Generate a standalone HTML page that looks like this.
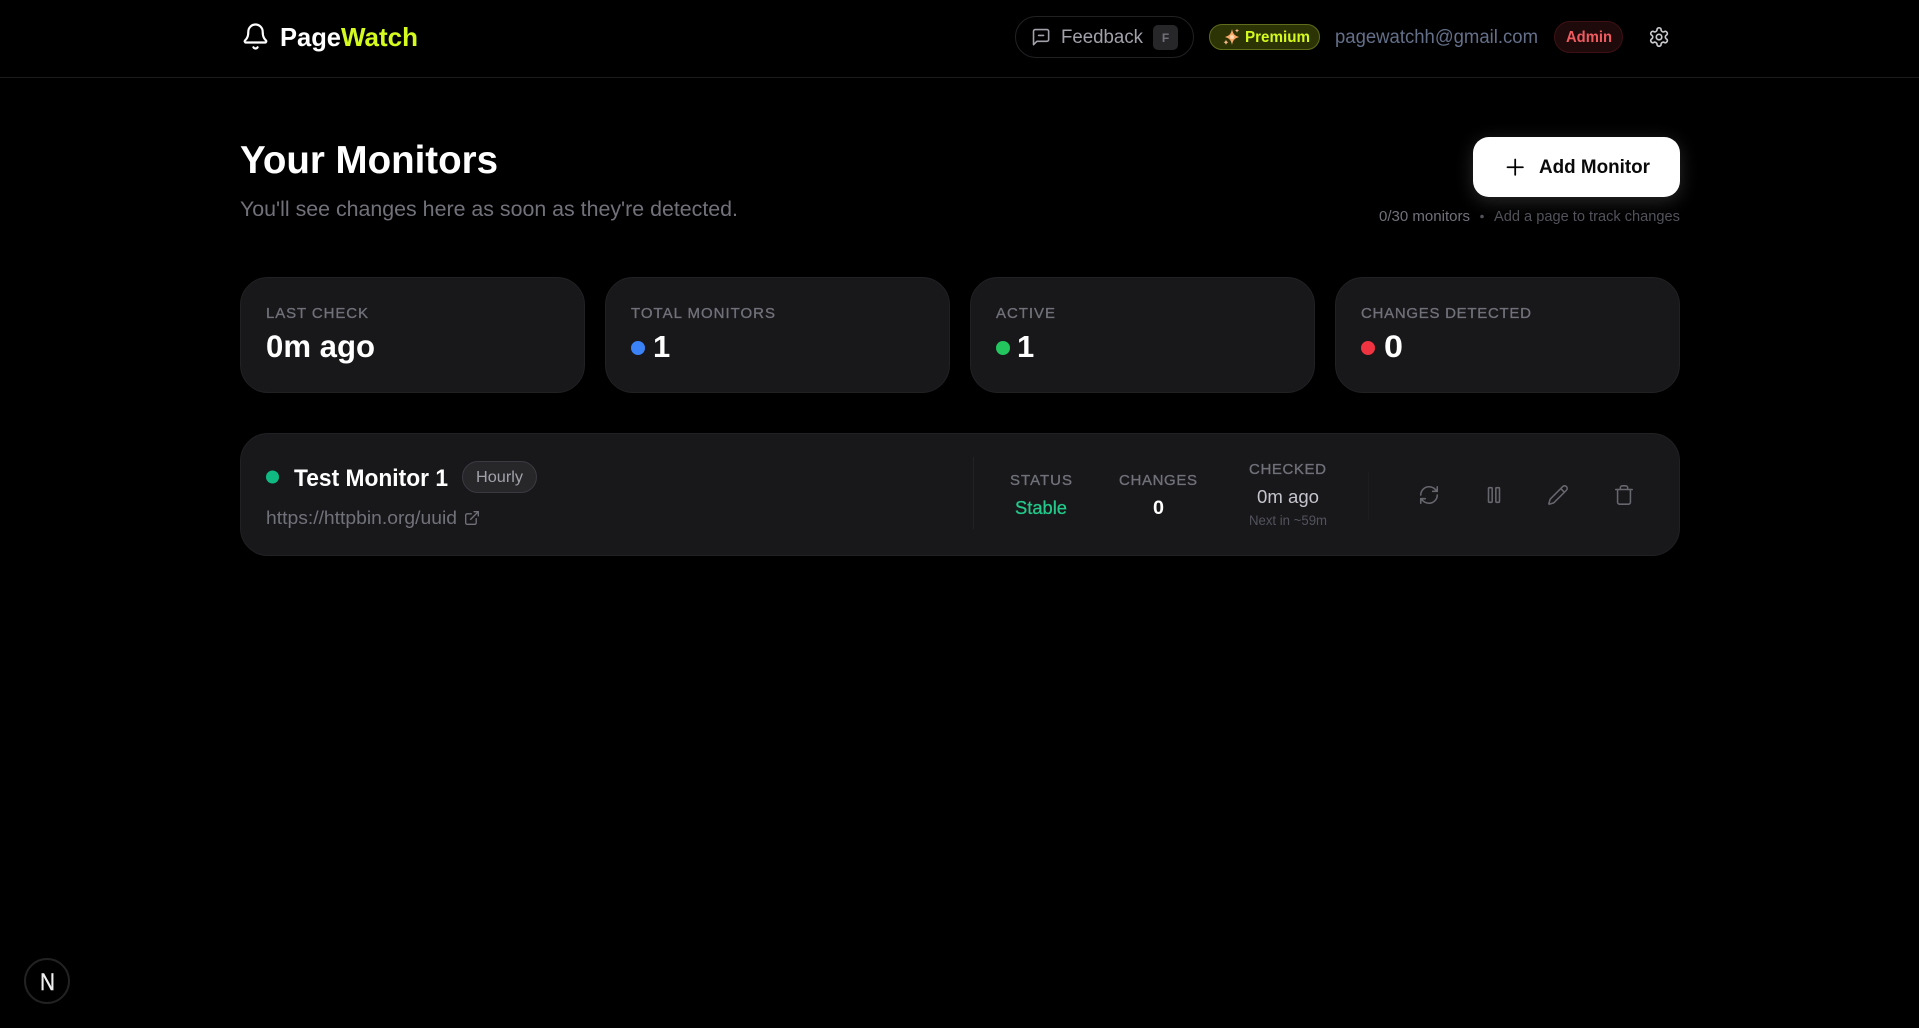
<!DOCTYPE html>
<html lang="en">
<head>
<meta charset="utf-8">
<title>PageWatch</title>
<style>
html,body{margin:0;padding:0;background:#000;width:1919px;height:1028px;overflow:hidden}
body{position:relative;font-family:"Liberation Sans",sans-serif}
.b{position:absolute;box-sizing:border-box}
.card{background:#18181b;border:1px solid #212124;border-radius:28px}
svg{position:absolute;left:0;top:0}
text{font-family:"Liberation Sans",sans-serif}
.i{fill:none;stroke-linecap:round;stroke-linejoin:round}
.l{font-size:15px;fill:#71717a;stroke:#71717a;stroke-width:.3px}
</style>
</head>
<body>
<div class="b" style="left:0;top:77px;width:1919px;height:1px;background:#1c1c1f"></div>
<div class="b" style="left:1015px;top:16px;width:179px;height:42px;border:1px solid #212124;border-radius:21px"></div>
<div class="b" style="left:1153px;top:25px;width:25px;height:25px;background:#27272a;border-radius:5px"></div>
<div class="b" style="left:1209px;top:24px;width:111px;height:26px;background:#2c3305;border:1px solid #5f6d1c;border-radius:13px"></div>
<div class="b" style="left:1554px;top:21px;width:69px;height:32px;background:#1f0a0b;border:1px solid #3d1114;border-radius:16px"></div>
<div class="b" style="left:1473px;top:137px;width:207px;height:60px;background:#fff;border-radius:16px;box-shadow:0 4px 18px rgba(255,255,255,.16)"></div>
<div class="b card" style="left:240px;top:277px;width:345px;height:116px"></div>
<div class="b card" style="left:605px;top:277px;width:345px;height:116px"></div>
<div class="b card" style="left:970px;top:277px;width:345px;height:116px"></div>
<div class="b card" style="left:1335px;top:277px;width:345px;height:116px"></div>
<div class="b card" style="left:240px;top:433px;width:1440px;height:123px"></div>
<div class="b" style="left:462px;top:461px;width:75px;height:32px;background:#27272a;border:1px solid #3a3a40;border-radius:16px"></div>
<div class="b" style="left:973px;top:457px;width:1px;height:72px;background:#222225"></div>
<div class="b" style="left:1368px;top:472px;width:1px;height:48px;background:#1d1d20"></div>
<div class="b" style="left:24px;top:958px;width:46px;height:46px;background:#000;border:2px solid #222;border-radius:50%"></div>

<svg width="1919" height="1028" viewBox="0 0 1919 1028" xmlns="http://www.w3.org/2000/svg">
  <!-- header -->
  <g class="i" stroke="#fff" stroke-width="1.8" transform="translate(241.100 22.100) scale(1.200)">
    <path d="M10.268 21a2 2 0 0 0 3.464 0"/>
    <path d="M3.262 15.326A1 1 0 0 0 4 17h16a1 1 0 0 0 .74-1.673C19.41 13.956 18 12.499 18 8A6 6 0 0 0 6 8c0 4.499-1.411 5.956-2.738 7.326"/>
  </g>
  <text x="280" y="46" font-size="26" font-weight="700" fill="#fff" textLength="61" lengthAdjust="spacingAndGlyphs">Page</text>
  <text x="341" y="46" font-size="26" font-weight="700" fill="#d4fa1e" textLength="77" lengthAdjust="spacingAndGlyphs">Watch</text>

  <g class="i" stroke="#a1a1aa" stroke-width="1.9" transform="translate(1031 27) scale(.84)">
    <path d="M21 15a2 2 0 0 1-2 2H7l-4 4V5a2 2 0 0 1 2-2h14a2 2 0 0 1 2 2z"/>
    <path d="M9 10h6"/>
  </g>
  <text x="1061" y="43" font-size="19" fill="#a1a1aa" textLength="82" lengthAdjust="spacingAndGlyphs">Feedback</text>
  <text x="1165.5" y="42" font-size="12" font-weight="700" fill="#71717a" text-anchor="middle">F</text>

  <g>
    <path d="M1232 29 C1233 34 1234.500 35.500 1239 37 C1234.500 38.500 1233 40 1232 45 C1231 40 1229.500 38.500 1225 37 C1229.500 35.500 1231 34 1232 29Z" fill="#f9a868"/>
    <circle cx="1232" cy="37" r="2" fill="#ffd9b0"/>
    <path d="M1226 39.500 C1226.400 41.200 1227 41.800 1228.500 42.300 C1227 42.800 1226.400 43.400 1226 45 C1225.600 43.400 1225 42.800 1223.500 42.300 C1225 41.800 1225.600 41.200 1226 39.500Z" fill="#f6b98a"/>
    <path d="M1237 28.500 C1237.300 29.800 1237.700 30.200 1239 30.600 C1237.700 31 1237.300 31.400 1237 32.700 C1236.700 31.400 1236.300 31 1235 30.600 C1236.300 30.200 1236.700 29.800 1237 28.500Z" fill="#f6b98a"/>
  </g>
  <text x="1245" y="42" font-size="15.500" font-weight="700" fill="#d4fa1e" textLength="65" lengthAdjust="spacingAndGlyphs">Premium</text>

  <text x="1335" y="43" font-size="19" fill="#64708a" textLength="203" lengthAdjust="spacingAndGlyphs">pagewatchh@gmail.com</text>
  <text x="1566" y="42" font-size="16" font-weight="700" fill="#ef5b5f" textLength="46" lengthAdjust="spacingAndGlyphs">Admin</text>
  <g class="i" stroke="#c9c9ce" stroke-width="1.800" transform="translate(1648 26) scale(.92)">
    <path d="M12.220 2h-.44a2 2 0 0 0-2 2v.18a2 2 0 0 1-1 1.730l-.43.25a2 2 0 0 1-2 0l-.15-.08a2 2 0 0 0-2.730.73l-.22.38a2 2 0 0 0 .73 2.730l.15.1a2 2 0 0 1 1 1.720v.51a2 2 0 0 1-1 1.740l-.15.09a2 2 0 0 0-.73 2.730l.22.38a2 2 0 0 0 2.730.73l.15-.08a2 2 0 0 1 2 0l.43.25a2 2 0 0 1 1 1.730V20a2 2 0 0 0 2 2h.44a2 2 0 0 0 2-2v-.18a2 2 0 0 1 1-1.730l.43-.25a2 2 0 0 1 2 0l.15.08a2 2 0 0 0 2.730-.73l.22-.39a2 2 0 0 0-.73-2.730l-.15-.08a2 2 0 0 1-1-1.740v-.5a2 2 0 0 1 1-1.740l.15-.09a2 2 0 0 0 .73-2.730l-.22-.38a2 2 0 0 0-2.730-.73l-.15.08a2 2 0 0 1-2 0l-.43-.25a2 2 0 0 1-1-1.730V4a2 2 0 0 0-2-2z"/>
    <circle cx="12" cy="12" r="3"/>
  </g>

  <!-- page heading -->
  <text x="240" y="173" font-size="39" font-weight="700" fill="#fff" textLength="258" lengthAdjust="spacingAndGlyphs">Your Monitors</text>
  <text x="240" y="216" font-size="21" fill="#71717a" textLength="498" lengthAdjust="spacingAndGlyphs">You'll see changes here as soon as they're detected.</text>

  <g class="i" stroke="#000" stroke-width="1.600" transform="translate(1502 154) scale(1.100)">
    <path d="M5 12h14"/><path d="M12 5v14"/>
  </g>
  <text x="1539" y="173" font-size="19.500" font-weight="700" fill="#0a0a0a" textLength="111" lengthAdjust="spacingAndGlyphs">Add Monitor</text>

  <text x="1379" y="221" font-size="14.500" fill="#71717a" textLength="91" lengthAdjust="spacingAndGlyphs">0/30 monitors</text>
  <circle cx="1482" cy="216.500" r="1.800" fill="#52525b"/>
  <text x="1494" y="221" font-size="14.500" fill="#52525b" textLength="186" lengthAdjust="spacingAndGlyphs">Add a page to track changes</text>

  <!-- stats -->
  <text class="l" x="266" y="318" textLength="102" lengthAdjust="spacing">LAST CHECK</text>
  <text x="266" y="357" font-size="31.500" font-weight="700" fill="#fff" textLength="109" lengthAdjust="spacingAndGlyphs">0m ago</text>

  <text class="l" x="631" y="318" textLength="144" lengthAdjust="spacing">TOTAL MONITORS</text>
  <circle cx="638" cy="348" r="7" fill="#3b82f6"/>
  <text x="653" y="357" font-size="31" font-weight="700" fill="#fff">1</text>

  <text class="l" x="996" y="318" textLength="59" lengthAdjust="spacing">ACTIVE</text>
  <circle cx="1003" cy="348" r="7" fill="#22c55e"/>
  <text x="1017" y="357" font-size="31" font-weight="700" fill="#fff">1</text>

  <text class="l" x="1361" y="318" textLength="170" lengthAdjust="spacing">CHANGES DETECTED</text>
  <circle cx="1368" cy="348" r="7" fill="#ef3340"/>
  <text x="1384" y="357" font-size="31.500" font-weight="700" fill="#fff" textLength="19" lengthAdjust="spacingAndGlyphs">0</text>

  <!-- monitor -->
  <circle cx="272.500" cy="477" r="6.500" fill="#10b981"/>
  <text x="294" y="486" font-size="24" font-weight="700" fill="#fff" textLength="154" lengthAdjust="spacingAndGlyphs">Test Monitor 1</text>
  <text x="476" y="482" font-size="15.500" fill="#a1a1aa" textLength="47" lengthAdjust="spacingAndGlyphs">Hourly</text>
  <text x="266" y="524" font-size="18.500" fill="#71717a" textLength="191" lengthAdjust="spacingAndGlyphs">https://httpbin.org/uuid</text>
  <g class="i" stroke="#71717a" stroke-width="1.900" transform="translate(463.600 509.600) scale(.7)">
    <path d="M15 3h6v6"/><path d="M10 14 21 3"/><path d="M18 13v6a2 2 0 0 1-2 2H5a2 2 0 0 1-2-2V8a2 2 0 0 1 2-2h6"/>
  </g>

  <text class="l" x="1010" y="485" textLength="62" lengthAdjust="spacing">STATUS</text>
  <text x="1015" y="514" font-size="18.500" fill="#22c98a" stroke="#22c98a" stroke-width=".3" textLength="52" lengthAdjust="spacingAndGlyphs">Stable</text>
  <text class="l" x="1119" y="485" textLength="78" lengthAdjust="spacing">CHANGES</text>
  <text x="1153" y="514" font-size="19" font-weight="700" fill="#fff" textLength="11" lengthAdjust="spacingAndGlyphs">0</text>
  <text class="l" x="1249" y="474" textLength="77" lengthAdjust="spacing">CHECKED</text>
  <text x="1257" y="503" font-size="18.500" fill="#c4c4cc" textLength="62" lengthAdjust="spacingAndGlyphs">0m ago</text>
  <text x="1249" y="525" font-size="13.500" fill="#52525b" textLength="78" lengthAdjust="spacingAndGlyphs">Next in ~59m</text>

  <g class="i" stroke="#66666d" stroke-width="1.700" transform="translate(1418 484) scale(.917)">
    <path d="M3 12a9 9 0 0 1 9-9 9.750 9.750 0 0 1 6.740 2.740L21 8"/><path d="M21 3v5h-5"/><path d="M21 12a9 9 0 0 1-9 9 9.750 9.750 0 0 1-6.740-2.740L3 16"/><path d="M8 16H3v5"/>
  </g>
  <g class="i" stroke="#66666d" stroke-width="1.700" transform="translate(1483 484) scale(.917)">
    <rect x="14" y="4" width="4" height="16" rx="1"/><rect x="6" y="4" width="4" height="16" rx="1"/>
  </g>
  <g class="i" stroke="#66666d" stroke-width="1.700" transform="translate(1547 484) scale(.917)">
    <path d="M21.174 6.812a1 1 0 0 0-3.986-3.987L3.842 16.174a2 2 0 0 0-.5.83l-1.321 4.352a.5.5 0 0 0 .623.622l4.353-1.320a2 2 0 0 0 .83-.497z"/><path d="m15 5 4 4"/>
  </g>
  <g class="i" stroke="#66666d" stroke-width="1.700" transform="translate(1613 484) scale(.917)">
    <path d="M3 6h18"/><path d="M19 6v14c0 1-1 2-2 2H7c-1 0-2-1-2-2V6"/><path d="M8 6V4c0-1 1-2 2-2h4c1 0 2 1 2 2v2"/>
  </g>

  <!-- next.js badge -->
  <text x="40" y="990" font-size="24" fill="#f0f0f0" stroke="#f0f0f0" stroke-width=".4" textLength="15" lengthAdjust="spacingAndGlyphs">N</text>
</svg>
</body>
</html>
